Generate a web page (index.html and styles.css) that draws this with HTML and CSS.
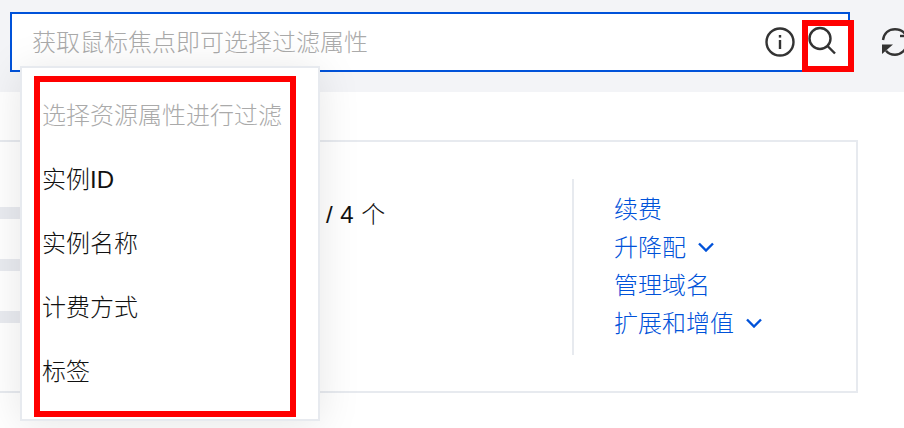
FILE: index.html
```html
<!DOCTYPE html>
<html lang="zh-CN">
<head>
    <meta charset="UTF-8">
    <title>实例列表</title>
    <link rel="stylesheet" href="styles.css">
</head>
<body>
    <!-- 顶部搜索栏 -->
    <div class="toolbar">
        <div class="search-box">
            <span class="placeholder">获取鼠标焦点即可选择过滤属性</span>
            <svg class="icon-info" width="30" height="30" viewBox="0 0 30 30" fill="none" stroke="#333" stroke-width="2.4">
                <circle cx="15" cy="15" r="13.5"/>
                <path d="M15 13v9"/>
                <path d="M15 8v2.6"/>
            </svg>
            <svg class="icon-search" width="30" height="32" viewBox="0 0 30 32" fill="none" stroke="#333" stroke-width="2.4">
                <circle cx="13" cy="12.5" r="10.500"/>
                <path d="M20.500 20l7.500 7.500"/>
            </svg>
        </div>
        <svg class="icon-refresh" width="30" height="32" viewBox="0 0 30 32" fill="none" stroke="#333" stroke-width="2.4">
            <path d="M3 14C4 7 9 3.200 15 3.200c5 0 9 2.300 11 6.300"/>
            <path d="M27 18c-1 6-6 10.800-12 10.800-4 0-7-1.500-9-4"/>
            <path d="M20 10h8"/>
            <path d="M2 18.500h11L2 28z" fill="#333" stroke="none"/>
        </svg>
    </div>

    <!-- 实例卡片 -->
    <div class="card">
        <div class="skeleton">
            <div class="skeleton-bar"></div>
            <div class="skeleton-bar"></div>
            <div class="skeleton-bar"></div>
        </div>
        <div class="count">/ 4 个</div>
        <div class="actions">
            <a href="#">续费</a>
            <a href="#">升降配
                <svg class="chevron" width="16" height="10" viewBox="0 0 16 10" fill="none" stroke="#0052d9" stroke-width="2.400"><path d="M1 1.500l7 7 7-7"/></svg>
            </a>
            <a href="#">管理域名</a>
            <a href="#">扩展和增值
                <svg class="chevron" width="16" height="10" viewBox="0 0 16 10" fill="none" stroke="#0052d9" stroke-width="2.400"><path d="M1 1.500l7 7 7-7"/></svg>
            </a>
        </div>
    </div>

    <!-- 下拉菜单 -->
    <div class="dropdown">
        <div class="dropdown-title">选择资源属性进行过滤</div>
        <div class="dropdown-item">实例ID</div>
        <div class="dropdown-item">实例名称</div>
        <div class="dropdown-item">计费方式</div>
        <div class="dropdown-item">标签</div>
    </div>

    <!-- 红框标注 -->
    <div class="mark mark-menu"></div>
    <div class="mark mark-search"></div>
</body>
</html>
```

FILE: styles.css
```css
/* Général */
html, body {
    height: 100%;
}

body {
    margin: 0;
    overflow: hidden;
    position: relative;
    background-color: #fff;
    color: #111;
    font-family: "Liberation Sans", "Noto Sans CJK SC", sans-serif;
    font-size: 24px;
    font-weight: 300;
}

/* 搜索栏 */
.toolbar {
    display: flex;
    align-items: flex-start;
    height: 92px;
    box-sizing: border-box;
    padding: 12px 0 0 10px;
    background-color: #f3f4f7;
}

.search-box {
    display: flex;
    align-items: center;
    flex-shrink: 0;
    width: 840px;
    height: 60px;
    box-sizing: border-box;
    padding-left: 20px;
    background-color: #fff;
    border: 2px solid #0052d9;
}

.placeholder {
    flex: 1;
    padding-bottom: 4px;
    color: #aaa;
}

.icon-info {
    margin-right: 12px;
}

.icon-search {
    margin-right: 11px;
}

.icon-refresh {
    margin-left: 30px;
    margin-top: 14px;
    flex-shrink: 0;
}

/* Carte */
.card {
    display: flex;
    align-items: flex-start;
    width: 858px;
    height: 253px;
    box-sizing: border-box;
    margin-top: 48px;
    border: 2px solid #e7eaef;
    border-left: none;
}

.skeleton {
    display: flex;
    flex-direction: column;
    gap: 40px;
    width: 22px;
    padding-top: 65px;
}

.skeleton-bar {
    height: 12px;
    background-color: #e9ebf0;
}

.count {
    width: 246px;
    margin-left: 304px;
    margin-top: 57px;
    line-height: 32px;
    word-spacing: 1px;
}

.actions {
    display: flex;
    flex-direction: column;
    height: 176px;
    box-sizing: border-box;
    margin-top: 37px;
    padding: 9px 0 0 40px;
    border-left: 2px solid #e7eaef;
}

.actions a {
    display: flex;
    align-items: center;
    height: 38px;
    color: #0052d9;
    text-decoration: none;
}

.chevron {
    margin-left: 12px;
    margin-top: 3px;
}

/* Menu déroulant */
.dropdown {
    position: absolute;
    left: 20px;
    top: 66px;
    width: 300px;
    height: 355px;
    box-sizing: border-box;
    padding: 16px 20px 0;
    background-color: #fff;
    border: 2px solid #e7eaef;
    box-shadow: 0 4px 40px rgba(0, 0, 0, 0.1);
}

.dropdown-title,
.dropdown-item {
    height: 64px;
    line-height: 64px;
}

.dropdown-title {
    color: #aaa;
}

/* Cadres rouges */
.mark {
    position: absolute;
    box-sizing: border-box;
    border: 6px solid #f00;
}

.mark-menu {
    left: 34px;
    top: 76px;
    width: 262px;
    height: 341px;
}

.mark-search {
    left: 802px;
    top: 20px;
    width: 52px;
    height: 52px;
}
```
